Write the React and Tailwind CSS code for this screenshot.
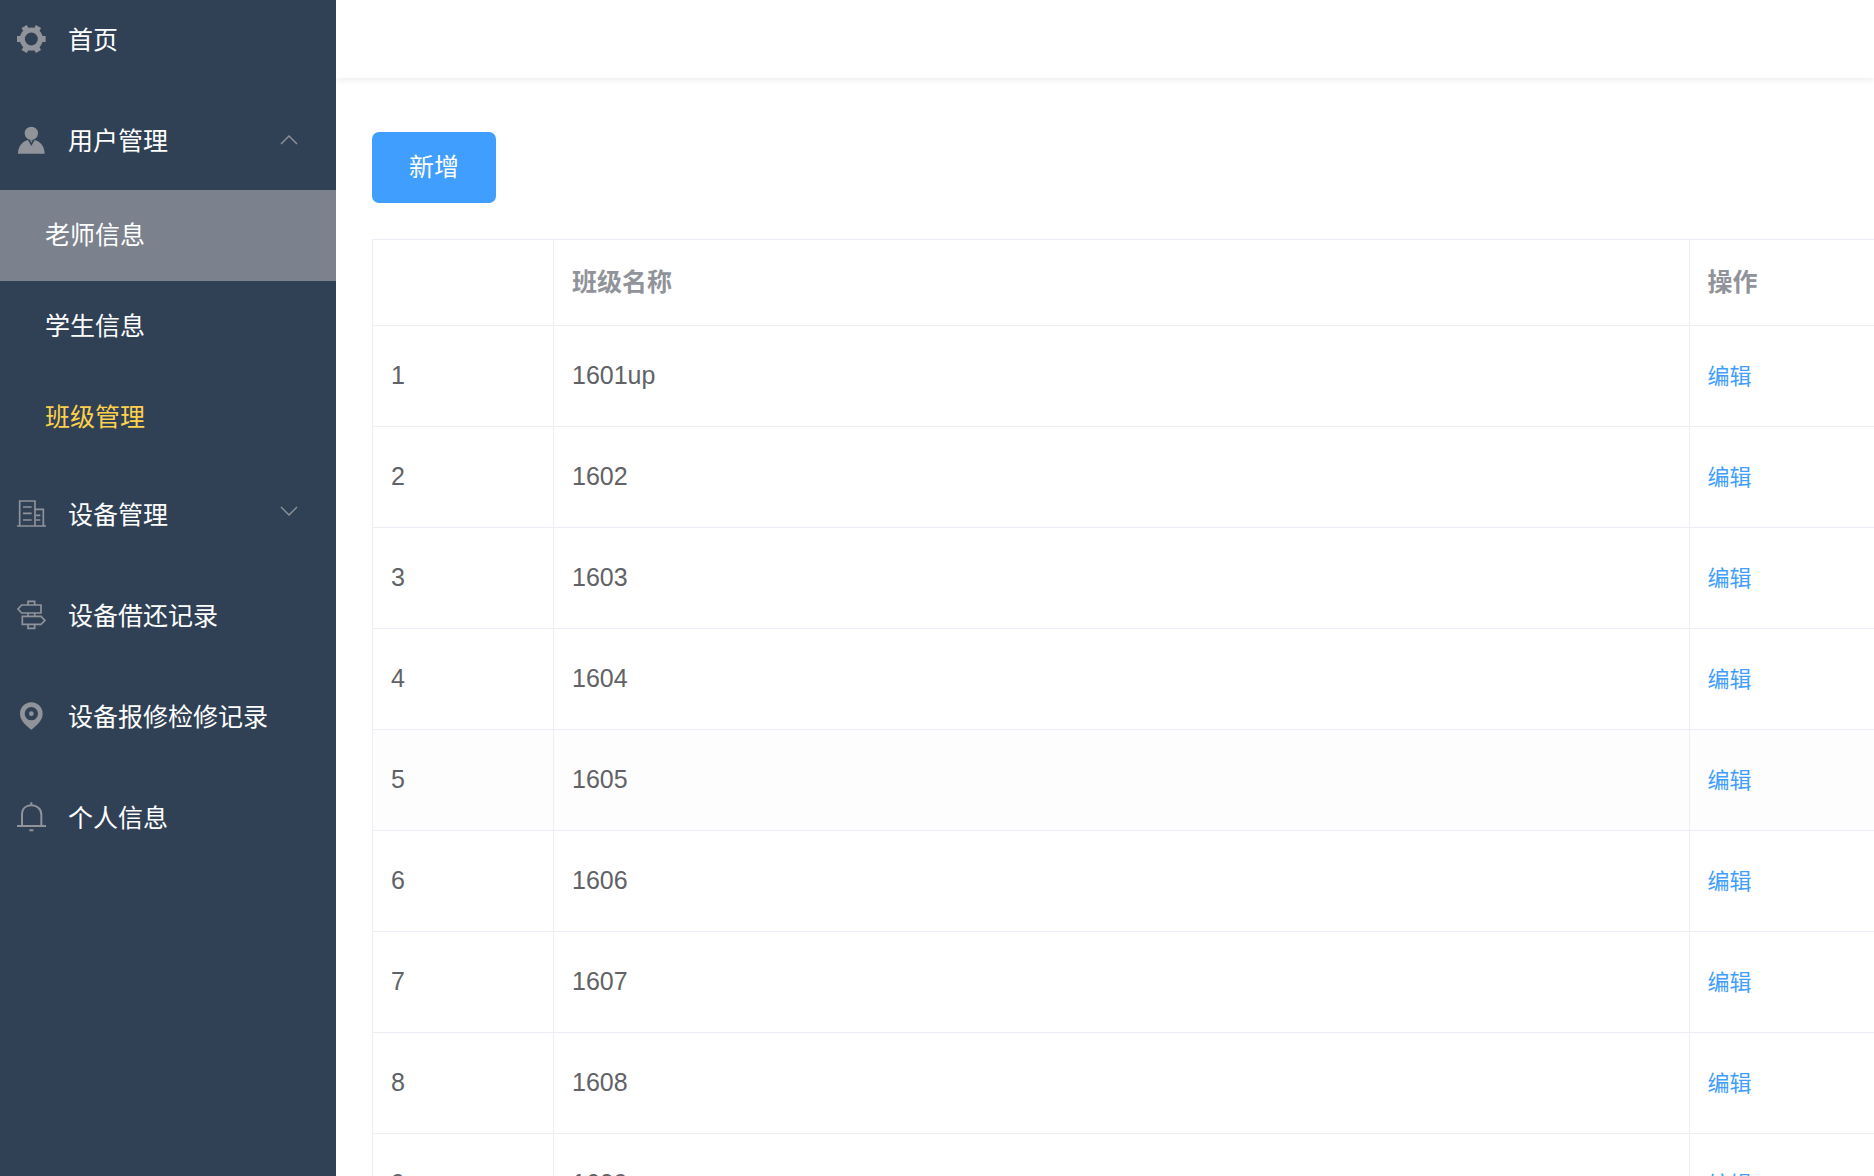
import React from 'react';

const GearIcon = () => (
  <g fill="currentColor">
    <circle cx="46" cy="45" r="27" fill="none" stroke="currentColor" strokeWidth="15" />
    {[0, 60, 120, 180, 240, 300].map((deg) => (
      <path key={deg} d="M76 36h13v18h-13z" transform={`rotate(${deg} 46 45)`} />
    ))}
  </g>
);

const UserIcon = () => (
  <g fill="currentColor">
    <circle cx="46" cy="25" r="20" />
    <path d="M6 86c0-20 12-37 30-41l10 18 10-18c18 4 30 21 30 41z" />
    <path d="M42 46h8l-4 7z" />
  </g>
);

const BuildingIcon = () => (
  <g fill="none" stroke="currentColor" strokeWidth="5">
    <path d="M11 81V6h46v75M57 31h25v50M3 81h87M21 24h26M21 43h26M21 63h26M60 49h13M60 63h13" />
  </g>
);

const GuideIcon = () => (
  <g fill="none" stroke="currentColor" strokeWidth="5">
    <path d="M17 15h58v24H17L6 27zM36 15V4h20v11M19 49h56l12 12-12 12H19zM36 73v12h20V73M36 39v10M56 39v10" />
  </g>
);

const LocationIcon = () => (
  <g fill="currentColor">
    <path
      fillRule="evenodd"
      d="M46 4C27 4 12 19 12 38c0 21 19 36 34 48 15-12 34-27 34-48C80 19 65 4 46 4zm0 14a20 20 0 1 1 0 40 20 20 0 0 1 0-40z"
    />
    <circle cx="46" cy="38" r="7" />
  </g>
);

const BellIcon = () => (
  <g fill="none" stroke="currentColor" strokeWidth="6">
    <path d="M18 72V38C18 20 30 10 46 10s30 10 30 28v34M3 72h87" />
    <path d="M46 1v9M40 85h12" />
  </g>
);

const Icon = ({ children }) => (
  <svg viewBox="0 0 90 90" className="w-[30px] h-[30px] shrink-0 text-[#909399]" aria-hidden="true">
    {children}
  </svg>
);

const Chevron = ({ up }) => (
  <svg viewBox="0 0 18 16" className="w-[18px] h-4 ml-auto text-[#909399]" aria-hidden="true">
    <path d={up ? 'M1 12l8-8 8 8' : 'M1 1l8 8 8-8'} fill="none" stroke="currentColor" strokeWidth="1.4" />
  </svg>
);

const itemClass = 'flex items-center gap-[22px] w-full h-[101px] pl-4 pr-[38px] text-left text-white';

const Label = ({ children }) => <span className="pt-[3px]">{children}</span>;

const userMenu = [
  { label: '老师信息', className: 'bg-[#7c828d] text-white' },
  { label: '学生信息', className: 'text-white' },
  { label: '班级管理', className: 'text-[#ffd04b]' },
];

const classes = ['1601up', '1602', '1603', '1604', '1605', '1606', '1607', '1608', '1609'];

const Sidebar = () => (
  <aside className="w-[336px] shrink-0 bg-[#304156] overflow-hidden">
    {/* Menu is scrolled down slightly */}
    <nav className="-mt-3">
      <a href="#home" className={itemClass}>
        <Icon><GearIcon /></Icon>
        <Label>首页</Label>
      </a>
      <button type="button" aria-expanded="true" className={itemClass}>
        <Icon><UserIcon /></Icon>
        <Label>用户管理</Label>
        <Chevron up />
      </button>
      <ul>
        {userMenu.map((item) => (
          <li key={item.label}>
            <a href="#user" className={`flex items-center h-[91px] pl-[45px] ${item.className}`}>
              {item.label}
            </a>
          </li>
        ))}
      </ul>
      <button type="button" aria-expanded="false" className={itemClass}>
        <Icon><BuildingIcon /></Icon>
        <Label>设备管理</Label>
        <Chevron />
      </button>
      <a href="#borrow" className={itemClass}>
        <Icon><GuideIcon /></Icon>
        <Label>设备借还记录</Label>
      </a>
      <a href="#repair" className={itemClass}>
        <Icon><LocationIcon /></Icon>
        <Label>设备报修检修记录</Label>
      </a>
      <a href="#profile" className={itemClass}>
        <Icon><BellIcon /></Icon>
        <Label>个人信息</Label>
      </a>
    </nav>
  </aside>
);

const ClassTable = () => (
  <table className="w-full table-fixed border-collapse border-t border-l border-[#ebeef5] text-left text-[#606266]">
    <thead>
      <tr className="h-[86px] text-[#909399]">
        <td className="w-[181px] border border-[#ebeef5]"></td>
        <th className="border border-[#ebeef5] px-[18px] font-bold">班级名称</th>
        <th className="w-[185px] border border-r-0 border-[#ebeef5] px-[18px] font-bold">操作</th>
      </tr>
    </thead>
    <tbody>
      {classes.map((name, index) => (
        <tr key={name} className={index === 4 ? 'h-[101px] bg-[#fdfdfd]' : 'h-[101px]'}>
          <td className="border border-[#ebeef5] px-[18px] pb-[2px]">{index + 1}</td>
          <td className="border border-[#ebeef5] px-[18px] pb-[2px]">{name}</td>
          <td className="border border-r-0 border-[#ebeef5] px-[18px]">
            <button type="button" className="text-[22px] text-[#409eff]">编辑</button>
          </td>
        </tr>
      ))}
    </tbody>
  </table>
);

const App = () => {
  return (
    <div className="flex h-screen overflow-hidden bg-white font-['Liberation_Sans','Noto_Sans_CJK_SC',sans-serif] text-[25px] leading-[41px]">
      <Sidebar />
      <div className="flex-1 min-w-0 overflow-hidden">
        <header className="h-[78px] bg-white shadow-[0_2px_7px_rgba(0,21,41,0.08)]"></header>
        <main className="pl-9 pt-[54px]">
          <button type="button" className="block h-[71px] px-[37px] rounded-[7px] bg-[#409eff] text-white">
            新增
          </button>
          <div className="mt-9">
            <ClassTable />
          </div>
        </main>
      </div>
    </div>
  );
};

export default App;
